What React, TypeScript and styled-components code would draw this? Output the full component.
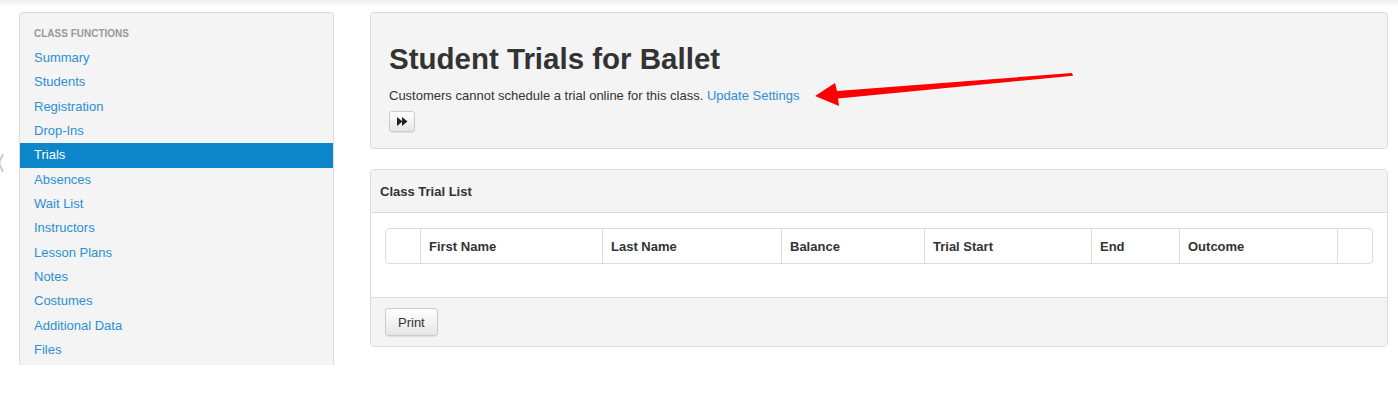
import React from "react";
import styled, { createGlobalStyle } from "styled-components";

const GlobalStyle = createGlobalStyle`
  html, body {
    margin: 0;
    padding: 0;
    background: #fff;
    font-family: "Liberation Sans", Arial, Helvetica, sans-serif;
    font-size: 13px;
    color: #333;
  }
  * { box-sizing: border-box; }
`;

const navItems = [
    "Summary",
    "Students",
    "Registration",
    "Drop-Ins",
    "Trials",
    "Absences",
    "Wait List",
    "Instructors",
    "Lesson Plans",
    "Notes",
    "Costumes",
    "Additional Data",
    "Files",
];

const columns = [
    { label: "", width: 34 },
    { label: "First Name", width: 182 },
    { label: "Last Name", width: 179 },
    { label: "Balance", width: 143 },
    { label: "Trial Start", width: 167 },
    { label: "End", width: 88 },
    { label: "Outcome", width: 158 },
    { label: "", width: 35 },
];

const ForwardIcon = () => (
    <svg width="11" height="9" viewBox="0 0 11 9">
        <polygon points="0,0 5.5,4.5 0,9" fill="#222" />
        <polygon points="5,0 10.5,4.5 5,9" fill="#222" />
    </svg>
);

const RedArrow = () => (
    <ArrowSvg width="265" height="45" viewBox="0 0 265 45">
        <polygon
            points="5,30 25,17 27,25 262,7 263,9.8 28,32.5 29,40"
            fill="#ff0000"
        />
    </ArrowSvg>
);

export default function App() {
    return (
        <>
            <GlobalStyle />
            <TopShade />
            <EdgeMark width="8" height="22" viewBox="0 0 8 22">
                <path d="M5 2 L1 11 L5 20" stroke="#ccc" strokeWidth="2" fill="none" />
            </EdgeMark>
            <Page>
                <Sidebar>
                    <NavHeader>Class Functions</NavHeader>
                    {navItems.map((item) => (
                        <NavLink key={item} $active={item === "Trials"}>
                            {item}
                        </NavLink>
                    ))}
                </Sidebar>
                <Main>
                    <Hero>
                        <Title>Student Trials for Ballet</Title>
                        <Lead>
                            Customers cannot schedule a trial online for this class.{" "}
                            <Link>Update Settings</Link>
                        </Lead>
                        <SmallButton>
                            <ForwardIcon />
                        </SmallButton>
                        <RedArrow />
                    </Hero>
                    <Panel>
                        <PanelHeading>Class Trial List</PanelHeading>
                        <PanelBody>
                            <Table>
                                <thead>
                                    <tr>
                                        {columns.map((col, i) => (
                                            <Th key={i} style={{ width: col.width }}>
                                                {col.label}
                                            </Th>
                                        ))}
                                    </tr>
                                </thead>
                            </Table>
                        </PanelBody>
                        <PanelFooter>
                            <DefaultButton>Print</DefaultButton>
                        </PanelFooter>
                    </Panel>
                </Main>
            </Page>
        </>
    );
}

const TopShade = styled.div`
    height: 6px;
    background: linear-gradient(#ececec, #fff);
`;
const EdgeMark = styled.svg`
    position: absolute;
    left: -2px;
    top: 152px;
`;
const Page = styled.div`
    display: flex;
    align-items: flex-start;
    gap: 36px;
    padding: 6px 11px 0 19px;
`;
const Sidebar = styled.nav`
    width: 315px;
    flex-shrink: 0;
    background: #f4f4f4;
    border: 1px solid #dcdcdc;
    border-bottom: none;
    border-radius: 4px 4px 0 0;
    padding: 9px 0 3px;
    display: flex;
    flex-direction: column;
`;
const NavHeader = styled.div`
    padding: 0 14px;
    line-height: 24px;
    font-size: 10px;
    font-weight: bold;
    text-transform: uppercase;
    color: #999;
`;
const NavLink = styled.a<{ $active?: boolean }>`
    display: block;
    padding: 3px 14px;
    line-height: 18.33px;
    font-size: 13px;
    color: ${(p) => (p.$active ? "#fff" : "#2c8fd6")};
    background: ${(p) => (p.$active ? "#0d87ca" : "transparent")};
    cursor: pointer;
`;
const Main = styled.div`
    flex: 1;
    display: flex;
    flex-direction: column;
    gap: 20px;
`;
const Hero = styled.div`
    position: relative;
    background: #f4f4f4;
    border: 1px solid #dcdcdc;
    border-radius: 4px;
    padding: 30px 18px 16px;
`;
const Title = styled.h1`
    margin: 0;
    font-size: 29.5px;
    line-height: 32px;
    font-weight: bold;
    color: #333;
`;
const Lead = styled.p`
    margin: 12px 0 6px;
    font-size: 13px;
    line-height: 18px;
    color: #333;
`;
const Link = styled.a`
    color: #2c8fd6;
    cursor: pointer;
`;
const SmallButton = styled.button`
    display: flex;
    align-items: center;
    justify-content: center;
    width: 26px;
    height: 21px;
    padding: 0;
    border: 1px solid #ccc;
    border-radius: 3px;
    background: linear-gradient(#fff, #e6e6e6);
    box-shadow: 0 1px 1px rgba(0, 0, 0, 0.08);
`;
const ArrowSvg = styled.svg`
    position: absolute;
    left: 439px;
    top: 53px;
`;
const Panel = styled.div`
    background: #fff;
    border: 1px solid #dcdcdc;
    border-radius: 4px;
    overflow: hidden;
`;
const PanelHeading = styled.div`
    background: #f4f4f4;
    border-bottom: 1px solid #dcdcdc;
    height: 43px;
    padding: 0 9px;
    display: flex;
    align-items: center;
    font-size: 13px;
    font-weight: bold;
    color: #333;
`;
const PanelBody = styled.div`
    padding: 15px 14px 33px;
`;
const Table = styled.table`
    width: 986px;
    border-collapse: separate;
    border-spacing: 0;
    border: 1px solid #dcdcdc;
    border-radius: 4px;
    table-layout: fixed;
`;
const Th = styled.th`
    height: 34px;
    padding: 0 8px;
    text-align: left;
    font-size: 13px;
    font-weight: bold;
    color: #333;
    border-left: 1px solid #dcdcdc;
    &:first-child {
        border-left: none;
    }
`;
const PanelFooter = styled.div`
    background: #f4f4f4;
    border-top: 1px solid #dcdcdc;
    padding: 10px 14px 10px;
`;
const DefaultButton = styled.button`
    display: block;
    height: 28px;
    padding: 0 12px;
    font-family: inherit;
    font-size: 13px;
    color: #333;
    border: 1px solid #ccc;
    border-radius: 3px;
    background: linear-gradient(#fff, #e6e6e6);
    box-shadow: 0 1px 1px rgba(0, 0, 0, 0.08);
`;
